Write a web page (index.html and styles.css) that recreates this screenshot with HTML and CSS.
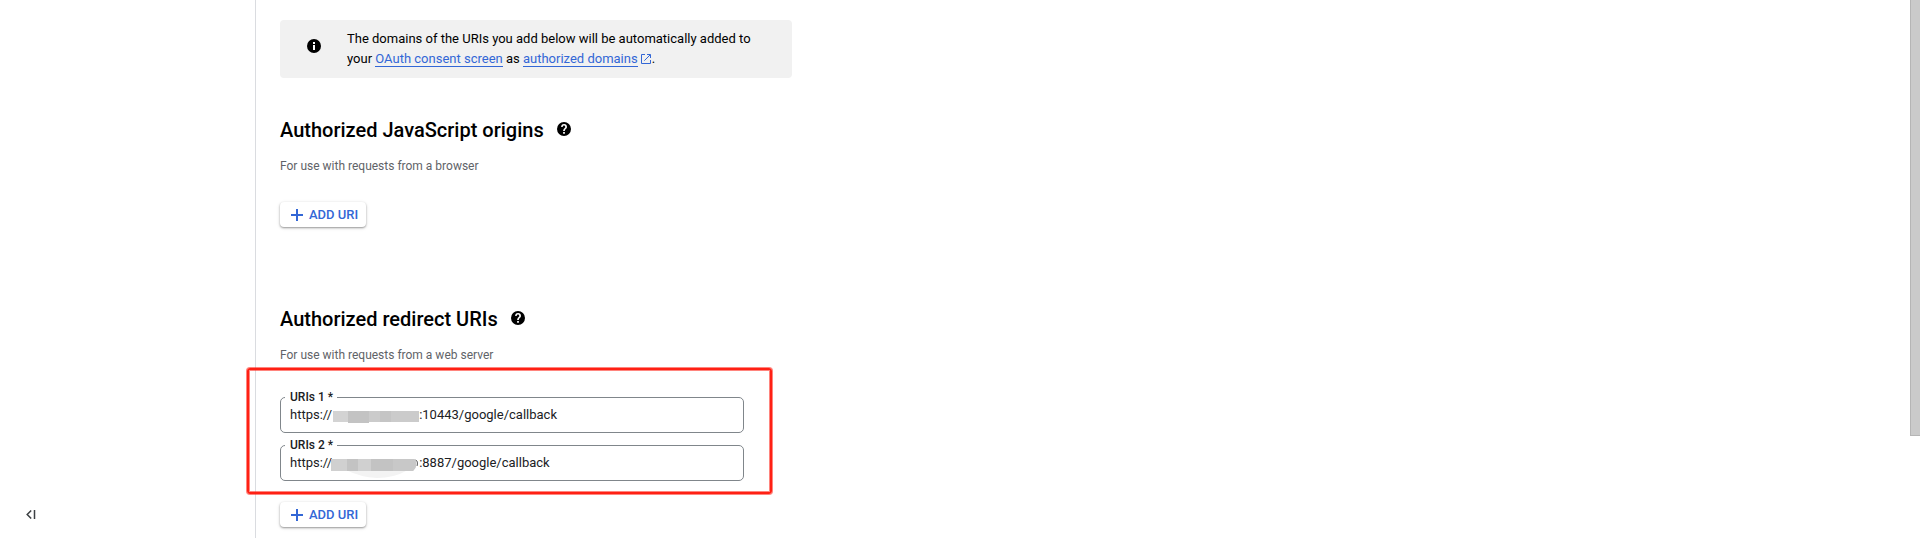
FILE: index.html
```html
<!DOCTYPE html>
<html lang="en">
<head>
<meta charset="utf-8">
<title>OAuth client</title>
<link rel="stylesheet" href="styles.css">
</head>
<body>
<svg class="defs" width="0" height="0">
  <symbol id="help" viewBox="0 0 24 24"><path d="M12 0a12 12 0 1 0 0 24 12 12 0 0 0 0-24zm1.500 20h-3v-3h3zm2.600-8.900-1.100 1.100c-.9.900-1.500 1.700-1.500 3.300h-3v-.6c0-1.400.6-2.600 1.500-3.500l1.500-1.500c.5-.4.700-1 .7-1.500a2.200 2.200 0 0 0-4.500 0H7.100a5 5 0 0 1 10 0c0 1-.4 2-1 2.700z"/></symbol>
  <symbol id="plus" viewBox="0 0 12 12"><path d="M5 0h2v5h5v2H7v5H5V7H0V5h5z"/></symbol>
</svg>
<div class="page">
  <aside class="sidebar">
    <svg class="collapse" width="10" height="9" viewBox="0 0 10 9"><path d="M5.200.5 1.200 4.500l4 4M8.500 0v9"/></svg>
  </aside>
  <main class="content">
    <div class="notice">
      <svg class="notice-icon" width="14" height="14" viewBox="0 0 14 14"><circle cx="7" cy="7" r="7"/><path fill="#fff" d="M6 3h2v2H6zM6 6h2v5H6z"/></svg>
      <p class="notice-text">The domains of the URIs you add below will be automatically added to<br>your <a class="link">OAuth consent screen</a> as <a class="link">authorized domains</a><svg class="external" width="10" height="10" viewBox="0 0 10 10"><path d="M4 .5H.5v9h9V6M6 .5h3.500V4M9.200.8 3.300 6.700"/></svg>.</p>
    </div>

    <section class="group origins">
      <h2 class="title">Authorized JavaScript origins<svg class="help" width="14" height="14"><use href="#help"/></svg></h2>
      <p class="hint">For use with requests from a browser</p>
      <button class="add"><svg width="12" height="12"><use href="#plus"/></svg>ADD URI</button>
    </section>

    <section class="group redirects">
      <h2 class="title">Authorized redirect URIs<svg class="help" width="14" height="14"><use href="#help"/></svg></h2>
      <p class="hint">For use with requests from a web server</p>
      <div class="fields">
        <div class="field">
          <span class="label">URIs 1 *</span>
          <span>https://</span><svg class="mask" width="87" height="20" viewBox="0 0 87 20"><path fill="#d3d3d3" d="M1 6h36v11H1z"/><path fill="#c3c3c3" d="M16 6h21v12H16z"/><path fill="#cbcbcb" d="M37 6h50v11H37z"/><path fill="#c5c5c5" d="M48 6h11v11H48z"/></svg><span>:10443/google/callback</span>
        </div>
        <div class="field">
          <span class="label">URIs 2 *</span>
          <span>https://</span><svg class="mask mask-second" width="87" height="25" viewBox="0 0 87 25"><path fill="#f3f3f3" d="M14 17h62q-14 8-31 8-17-1-31-8z"/><path fill="#d0d0d0" d="M-1 6h84q4 6-2 12H-1z"/><path fill="#c3c3c3" d="M15 6h11v12H15zM39 6h22v12H39z"/><path fill="#c8c8c8" d="M61 6h21q5 6-1 12H61z"/><path fill="none" stroke="#666" d="M83.500 7q2 .5 2 3t-.5 3"/></svg><span>:8887/google/callback</span>
        </div>
        <div class="highlight"></div>
      </div>
      <button class="add"><svg width="12" height="12"><use href="#plus"/></svg>ADD URI</button>
    </section>
  </main>
  <div class="scroll"><div class="thumb"></div></div>
</div>
</body>
</html>
```
FILE: styles.css
```css
* { box-sizing: border-box; }
body { margin: 0; background: #fff; color: #000; font: 13px/20px Roboto, sans-serif; overflow: hidden; }
h2, p { margin: 0; }
svg { flex: none; }
.defs { position: absolute; }
.page { display: flex; height: 538px; overflow: hidden; }
.sidebar { flex: none; width: 256px; border-right: 1px solid #dadce0; display: flex; align-items: flex-end; padding: 0 0 19px 26px; }
.collapse { fill: none; stroke: #3c4043; stroke-width: 1.5; }
.content { flex: 1; padding: 20px 24px 0; }
.notice { display: flex; width: 512px; height: 58px; padding: 9px 0 0 27px; border-radius: 4px; background: #f1f1f1; }
.notice-icon { margin: 10px 26px 0 0; }
.link { color: #3367d6; border-bottom: 1px solid #3367d6; }
.external { margin: 0 1px 0 3px; vertical-align: -1px; fill: none; stroke: #3367d6; stroke-width: 1; }
.group { display: flex; flex-direction: column; align-items: flex-start; }
.origins { padding-top: 40px; }
.redirects { padding-top: 80px; }
.title { display: flex; font-size: 20px; line-height: 24px; font-weight: 500; }
.help { margin: 4px 0 0 13px; }
.hint { margin-top: 16px; color: #5f6368; font-size: 12px; line-height: 16px; }
.add { display: flex; align-items: center; gap: 6px; width: 86px; height: 25px; margin-top: 28px; padding: 0 0 0 11px; border: 0; border-radius: 4px; background: #fff; color: #3367d6; font: 500 13px/24px Roboto, sans-serif; white-space: nowrap; box-shadow: 0 1px 2px rgba(0,0,0,.36), 0 1px 4px rgba(0,0,0,.1); }
.add svg { fill: #3367d6; }
.fields { position: relative; display: grid; gap: 12px; margin-top: 34px; }
.fields + .add { margin-top: 21px; }
.field { position: relative; display: flex; width: 464px; height: 36px; padding: 7px 9px; border: 1px solid #80868b; border-radius: 5px; color: #202124; white-space: pre; }
.label { position: absolute; left: 4px; top: -9px; padding: 0 4px 0 5px; background: #fff; font-size: 12px; line-height: 16px; font-weight: 500; color: #202124; }
.mask { overflow: visible; }
.mask-second { margin-bottom: -5px; }
.highlight { position: absolute; left: -33px; top: -29px; width: 525px; height: 126px; border: 2px solid #ff2014; border-radius: 3px; box-shadow: 0 0 0 1px rgba(255,32,20,.55), inset 0 0 0 1px rgba(255,32,20,.55); }
.scroll { width: 10px; }
.thumb { height: 436px; background: #cacaca; border: solid #b5b5b5; border-width: 0 0 1px 1px; }
```
